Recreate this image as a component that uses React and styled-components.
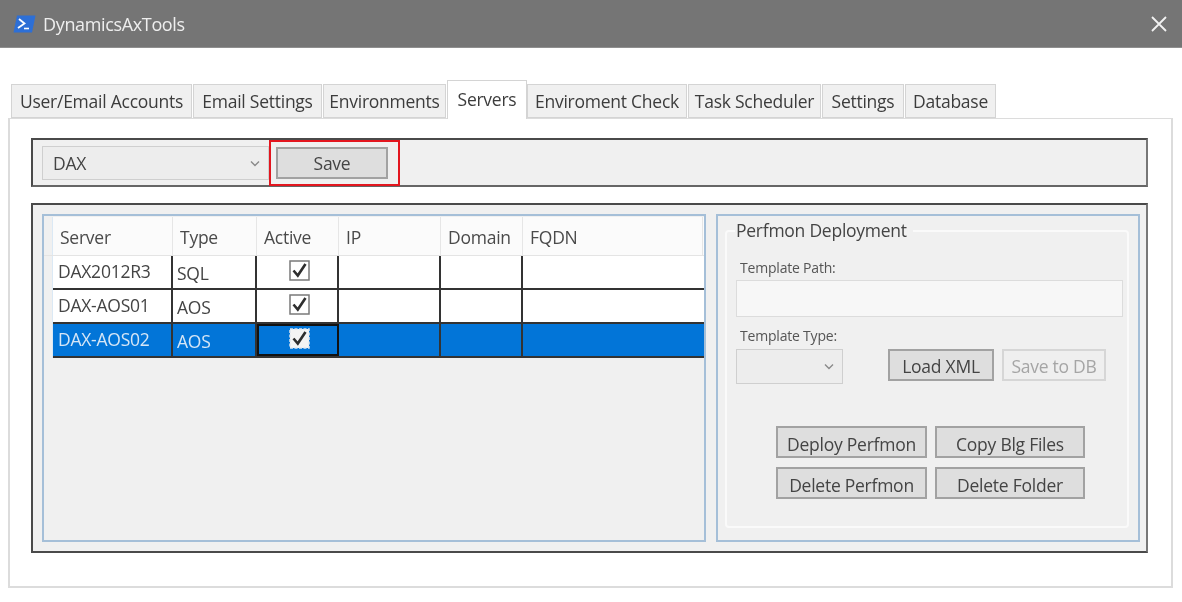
import React from 'react'
import styled, { createGlobalStyle } from 'styled-components'

const GlobalStyle = createGlobalStyle`
  html, body { margin: 0; padding: 0; background: #fff; }
  body { font-family: "Open Sans", "Noto Sans", sans-serif; color: #333; overflow: hidden; }
  * { box-sizing: border-box; }
`
const Window = styled.div`
  width: 1182px;
  height: 602px;
  background: #fff;
  filter: blur(0.6px);
  display: flex;
  flex-direction: column;
`
const TitleBar = styled.div`
  height: 48px;
  background: #757575;
  border-bottom: 1px solid #8f8f8f;
  display: flex;
  align-items: center;
  padding: 0 14px 0 14px;
  color: #eeeeee;
  font-size: 18px;
  letter-spacing: -0.35px;
`
const AppIcon = styled.svg`
  width: 23px;
  height: 18px;
  margin-right: 7px;
  margin-left: -1px;
`
const CloseIcon = styled.svg`
  width: 18px;
  height: 18px;
  margin-left: auto;
`
const Body = styled.div`
  flex: 1;
  padding: 31px 9px 14px 8px;
  display: flex;
  flex-direction: column;
`
const TabStrip = styled.div`
  display: flex;
  align-items: flex-end;
  height: 39px;
  padding-left: 3px;
  position: relative;
  z-index: 1;
`
const Tab = styled.div`
  width: ${p => p.$w}px;
  height: ${p => (p.$active ? 39 : 34)}px;
  margin-right: ${p => (p.$active ? 0 : 1)}px;
  margin-bottom: ${p => (p.$active ? -1 : 0)}px;
  background: ${p => (p.$active ? '#fff' : '#f0f0f0')};
  border: 1px solid #d4d4d4;
  border-bottom: ${p => (p.$active ? 'none' : '1px solid #d4d4d4')};
  font-size: 17.5px;
  letter-spacing: -0.25px;
  color: #3c3c3c;
  display: flex;
  align-items: center;
  justify-content: center;
  white-space: nowrap;
  padding-bottom: ${p => (p.$active ? 2 : 1)}px;
`
const TabPage = styled.div`
  flex: 1;
  border: 2px solid #dcdcdc;
  border-top-width: 1px;
  padding: 19px 23px 33px 21px;
  display: flex;
  flex-direction: column;
  gap: 16px;
`
const Toolbar = styled.div`
  height: 49px;
  background: #f0f0f0;
  border: 2px solid #4a4a4a;
  border-right-color: #777;
  border-bottom-color: #666;
  display: flex;
  align-items: flex-start;
  padding: 6px 0 0 9px;
`
const ComboBox = styled.div`
  width: ${p => p.$w}px;
  height: ${p => p.$h}px;
  border: 1.5px solid #cfcfcf;
  background: #ededed;
  display: flex;
  align-items: center;
  padding: 0 8px 0 10px;
  font-size: 17.5px;
  letter-spacing: -0.2px;
  color: #444;
`
const Caret = styled.svg`
  width: 10px;
  height: 7px;
  margin-left: auto;
`
const Highlight = styled.div`
  width: 131px;
  height: 46px;
  margin-top: -6px;
  border: 2px solid #e3161f;
  padding: 5px 0 0 5px;
`
const Button = styled.div`
  width: ${p => p.$w}px;
  height: 32px;
  background: ${p => (p.$disabled ? '#efefef' : '#dedede')};
  border: 2px solid ${p => (p.$disabled ? '#d6d6d6' : '#a2a2a2')};
  color: ${p => (p.$disabled ? '#a5a5a5' : '#444')};
  font-size: 17.5px;
  letter-spacing: -0.25px;
  padding-top: ${p => p.$drop || 0}px;
  display: flex;
  align-items: center;
  justify-content: center;
  white-space: nowrap;
`
const Workspace = styled.div`
  flex: 1;
  background: #f0f0f0;
  border: 2px solid #4a4a4a;
  border-right-color: #777;
  padding: 9px 6px 9px 9px;
  display: flex;
  gap: 10px;
`
const GridPane = styled.div`
  width: 664px;
  flex: none;
  border: 2px solid #a5bfd8;
  padding-top: 1px;
  display: flex;
  flex-direction: column;
`
const GridRow = styled.div`
  display: grid;
  grid-template-columns: 9px 120px 84px 82px 102px 82px 180px;
  height: ${p => (p.$header ? 39 : 34)}px;
  background: ${p => (p.$header ? '#fbfbfb' : p.$selected ? '#0275d8' : '#fff')};
  color: ${p => (p.$selected ? '#d6e6f6' : '#444')};
  border-bottom: ${p => (p.$header ? '1px solid #e4e4e4' : '2px solid #333')};
  font-size: 17.5px;
  letter-spacing: -0.25px;
`
const RowHeader = styled.div`
  background: #f0f0f0;
  margin-bottom: ${p => (p.$header ? 0 : -2)}px;
  border-right: 1px solid #dbe9f5;
`
const HeadCell = styled.div`
  border-right: 1px solid #e6e6e6;
  padding: 2px 0 0 7px;
  display: flex;
  align-items: center;
  color: #4a4a4a;
`
const Cell = styled.div`
  border-right: ${p => (p.$last ? 'none' : '2px solid #333')};
  padding: ${p => (p.$type ? '2px 0 0 4px' : '0 0 3px 5px')};
  display: flex;
  align-items: center;
  justify-content: ${p => (p.$center ? 'center' : 'flex-start')};
  outline: ${p => (p.$focus ? '2px solid #111' : 'none')};
  outline-offset: -2px;
`
const Check = styled.svg`
  width: 21px;
  height: 21px;
  margin-bottom: 1px;
`
const DeployPane = styled.div`
  width: 424px;
  flex: none;
  border: 2px solid #a5bfd8;
  padding: 2px 9px 12px 7px;
  display: flex;
`
const GroupBox = styled.fieldset`
  flex: 1;
  margin: 0;
  border: 2px solid #fafafa;
  border-radius: 4px;
  padding: 16px 4px 0 9px;
  min-width: 0;
`
const Legend = styled.legend`
  font-size: 17.5px;
  letter-spacing: -0.25px;
  color: #444;
  padding: 0 6px 0 1px;
  margin-left: -1px;
  line-height: 25px;
`
const FieldLabel = styled.div`
  font-size: 14px;
  letter-spacing: -0.2px;
  line-height: 18px;
  color: #555;
  padding-left: 4px;
`
const PathInput = styled.div`
  height: 37px;
  margin: 3px 0 10px 0;
  background: #f7f7f7;
  border: 1.5px solid #dcdcdc;
`
const TemplateRow = styled.div`
  display: flex;
  align-items: flex-start;
  margin-top: 4px;
`
const ActionGrid = styled.div`
  display: grid;
  grid-template-columns: 151px 150px;
  gap: 9px 8px;
  margin: 42px 0 0 40px;
`
const Spacer = styled.div`
  width: ${p => p.$w}px;
  flex: none;
`

const PowerShellIcon = () => (
  <AppIcon viewBox="0 0 23 18">
    <path d="M4 0.5H22.5L19 17.5H0.5Z" fill="#2d6fd6" />
    <path d="M6 4L11.5 8.5L5 13" stroke="#fff" strokeWidth="1.8" fill="none" />
    <path d="M11 13.5H16" stroke="#fff" strokeWidth="1.6" />
  </AppIcon>
)

const DownCaret = () => (
  <Caret viewBox="0 0 10 7">
    <path d="M1 1.5L5 5.5L9 1.5" stroke="#8a8a8a" strokeWidth="1.4" fill="none" />
  </Caret>
)

const CheckBox = ({ selected }) => (
  <Check viewBox="0 0 21 21">
    <rect x="1" y="1" width="19" height="19" fill={selected ? '#f4f4f4' : '#fff'} stroke={selected ? '#dfe6ee' : '#7a7a7a'} strokeWidth="1.5" strokeDasharray={selected ? '3 1.5' : undefined} />
    <path d="M4.5 10.5L8.8 15.5L16.5 4" stroke="#2e2e2e" strokeWidth="2.6" fill="none" />
  </Check>
)

const tabs = [
  ['User/Email Accounts', 181],
  ['Email Settings', 129],
  ['Environments', 123],
  ['Servers', 80, true],
  ['Enviroment Check', 160],
  ['Task Scheduler', 133],
  ['Settings', 82],
  ['Database', 91],
]
const columns = ['Server', 'Type', 'Active', 'IP', 'Domain', 'FQDN']
const servers = [
  { name: 'DAX2012R3', type: 'SQL' },
  { name: 'DAX-AOS01', type: 'AOS' },
  { name: 'DAX-AOS02', type: 'AOS', selected: true },
]

const App = () => (
  <Window>
    <GlobalStyle />
    <TitleBar>
      <PowerShellIcon />
      DynamicsAxTools
      <CloseIcon viewBox="0 0 18 18">
        <path d="M2 2L16 16M16 2L2 16" stroke="#f2f2f2" strokeWidth="1.8" />
      </CloseIcon>
    </TitleBar>
    <Body>
      <TabStrip>
        {tabs.map(([label, w, active]) => (
          <Tab key={label} $w={w} $active={active}>{label}</Tab>
        ))}
      </TabStrip>
      <TabPage>
        <Toolbar>
          <ComboBox $w={227} $h={34}>
            DAX
            <DownCaret />
          </ComboBox>
          <Highlight>
            <Button $w={112}>Save</Button>
          </Highlight>
        </Toolbar>
        <Workspace>
          <GridPane>
            <GridRow $header>
              <RowHeader $header />
              {columns.map(c => <HeadCell key={c}>{c}</HeadCell>)}
            </GridRow>
            {servers.map(s => (
              <GridRow key={s.name} $selected={s.selected}>
                <RowHeader />
                <Cell>{s.name}</Cell>
                <Cell $type>{s.type}</Cell>
                <Cell $center $focus={s.selected}>
                  <CheckBox selected={s.selected} />
                </Cell>
                <Cell />
                <Cell />
                <Cell $last />
              </GridRow>
            ))}
          </GridPane>
          <DeployPane>
            <GroupBox>
              <Legend>Perfmon Deployment</Legend>
              <FieldLabel>Template Path:</FieldLabel>
              <PathInput />
              <FieldLabel>Template Type:</FieldLabel>
              <TemplateRow>
                <ComboBox $w={107} $h={35}>
                  <DownCaret />
                </ComboBox>
                <Spacer $w={45} />
                <Button $w={106} $drop={1}>Load XML</Button>
                <Spacer $w={8} />
                <Button $w={104} $disabled $drop={1}>Save to DB</Button>
              </TemplateRow>
              <ActionGrid>
                <Button $w={151} $drop={3}>Deploy Perfmon</Button>
                <Button $w={150} $drop={3}>Copy Blg Files</Button>
                <Button $w={151} $drop={3}>Delete Perfmon</Button>
                <Button $w={150} $drop={3}>Delete Folder</Button>
              </ActionGrid>
            </GroupBox>
          </DeployPane>
        </Workspace>
      </TabPage>
    </Body>
  </Window>
)

export default App
